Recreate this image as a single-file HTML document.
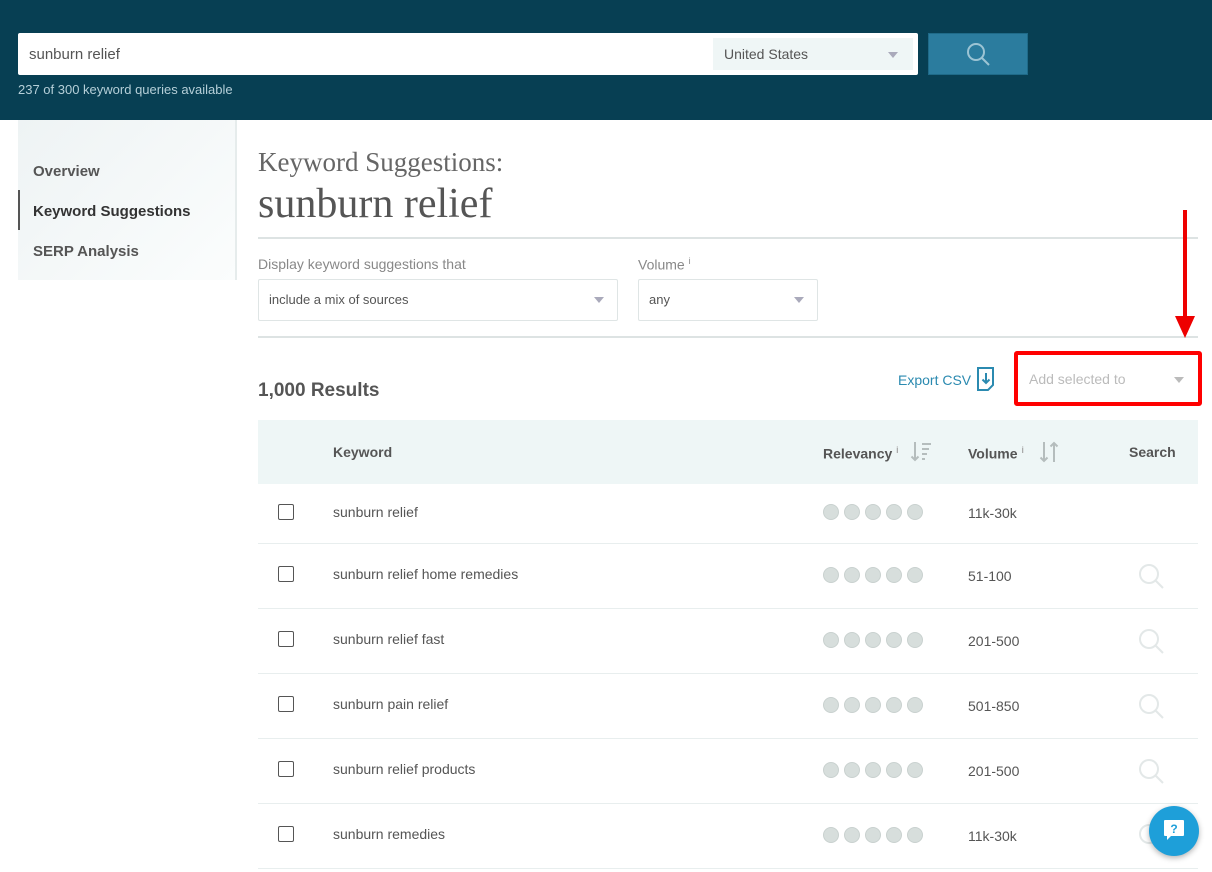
<!DOCTYPE html>
<html><head><style>
*{box-sizing:border-box;margin:0;padding:0}
body{width:1212px;height:872px;overflow:hidden;background:#fff;font-family:"Liberation Sans",sans-serif;position:relative;color:#4a4f52}
.a{position:absolute}
.hdr{left:0;top:0;width:1212px;height:120px;background:#073f53}
.dot{display:inline-block;width:16px;height:16px;border-radius:50%;background:#d7dedc;border:1px solid #c9d1cf;margin-right:5px}
.row{left:258px;width:940px;height:65px;border-bottom:1px solid #e8eeee}
.cb{left:20px;width:16px;height:16px;border:1.5px solid #555;border-radius:2px}
.kw{left:75px;font-size:14px;color:#555}
.vol{left:710px;font-size:14px;color:#555}
.dots{left:565px}
.caret{width:0;height:0;border-left:5px solid transparent;border-right:5px solid transparent;border-top:6px solid #aab}
</style></head><body>
<div class="a hdr"></div>
<div class="a" style="left:18px;top:33px;width:900px;height:42px;background:#fff;border-radius:2px"></div>
<div class="a" style="left:29px;top:46px;font-size:15px;color:#555">sunburn relief</div>
<div class="a" style="left:713px;top:38px;width:200px;height:32px;background:#eff6f6"></div>
<div class="a" style="left:724px;top:46px;font-size:14px;color:#555">United States</div>
<div class="a caret" style="left:888px;top:52px"></div>
<div class="a" style="left:928px;top:33px;width:100px;height:42px;background:#2b7c9e;border:1px solid #1f6a88"></div>
<svg class="a" style="left:964px;top:40px" width="30" height="30" viewBox="0 0 30 30"><circle cx="12" cy="12" r="8" fill="none" stroke="#9cc4d4" stroke-width="2"/><line x1="18" y1="18" x2="25" y2="25" stroke="#9cc4d4" stroke-width="2"/></svg>
<div class="a" style="left:18px;top:82px;font-size:13px;color:#b5cfd8">237 of 300 keyword queries available</div>

<div class="a" style="left:18px;top:120px;width:219px;height:160px;background:linear-gradient(135deg,#eef3f4,#fbfdfd);border-right:2px solid #e6ecec"></div>
<div class="a" style="left:18px;top:190px;width:2px;height:40px;background:#555"></div>
<div class="a" style="left:33px;top:163px;font-size:15px;font-weight:bold;color:#555">Overview</div>
<div class="a" style="left:33px;top:203px;font-size:15px;font-weight:bold;color:#333">Keyword Suggestions</div>
<div class="a" style="left:33px;top:243px;font-size:15px;font-weight:bold;color:#555">SERP Analysis</div>

<div class="a" style="left:258px;top:147px;font-family:'Liberation Serif',serif;font-size:27px;color:#666">Keyword Suggestions:</div>
<div class="a" style="left:258px;top:180px;font-family:'Liberation Serif',serif;font-size:42px;color:#555">sunburn relief</div>
<div class="a" style="left:258px;top:237px;width:940px;height:2px;background:#dde3e3"></div>
<div class="a" style="left:258px;top:256px;font-size:14px;color:#888">Display keyword suggestions that</div>
<div class="a" style="left:638px;top:256px;font-size:14px;color:#888">Volume <sup style="font-size:9px">i</sup></div>
<div class="a" style="left:258px;top:279px;width:360px;height:42px;border:1px solid #dfe5e5;border-radius:2px"></div>
<div class="a" style="left:269px;top:292px;font-size:13px;color:#555">include a mix of sources</div>
<div class="a caret" style="left:594px;top:297px"></div>
<div class="a" style="left:638px;top:279px;width:180px;height:42px;border:1px solid #dfe5e5;border-radius:2px"></div>
<div class="a" style="left:649px;top:292px;font-size:13px;color:#555">any</div>
<div class="a caret" style="left:794px;top:297px"></div>
<div class="a" style="left:258px;top:336px;width:940px;height:2px;background:#dde3e3"></div>

<div class="a" style="left:258px;top:380px;font-size:19px;font-weight:bold;color:#555">1,000 Results</div>
<div class="a" style="left:898px;top:372px;font-size:14px;color:#2b8ab0">Export CSV</div>
<svg class="a" style="left:976px;top:366px" width="20" height="26" viewBox="0 0 20 26"><path d="M2 2h15v17l-5 5H2z" fill="none" stroke="#2b8ab0" stroke-width="2"/><path d="M10 7v10M6.5 13.5L10 17l3.5-3.5" fill="none" stroke="#2b8ab0" stroke-width="2"/></svg>
<div class="a" style="left:1014px;top:351px;width:188px;height:55px;border:4px solid #f00;border-radius:3px"></div>
<div class="a" style="left:1029px;top:371px;font-size:14px;color:#bbb">Add selected to</div>
<div class="a caret" style="left:1174px;top:377px;border-top-color:#bbb"></div>
<svg class="a" style="left:1172px;top:210px" width="26" height="130" viewBox="0 0 26 130"><line x1="13" y1="0" x2="13" y2="108" stroke="#e00" stroke-width="4"/><path d="M3 106L13 128L23 106z" fill="#e00"/></svg>

<div class="a" style="left:258px;top:420px;width:940px;height:64px;background:#eef6f6"></div>
<div class="a" style="left:333px;top:444px;font-size:14px;font-weight:bold;color:#555">Keyword</div>
<div class="a" style="left:823px;top:445px;font-size:14px;font-weight:bold;color:#555">Relevancy <sup style="font-size:9px;color:#aaa">i</sup></div>
<svg class="a" style="left:910px;top:440px" width="24" height="24" viewBox="0 0 24 24"><path d="M5 2v18M1.5 16.5L5 20l3.5-3.5" fill="none" stroke="#b5bdbd" stroke-width="2"/><path d="M12 4h9M12 9h7M12 14h5M12 19h3" stroke="#b5bdbd" stroke-width="2"/></svg>
<div class="a" style="left:968px;top:445px;font-size:14px;font-weight:bold;color:#555">Volume <sup style="font-size:9px;color:#aaa">i</sup></div>
<svg class="a" style="left:1037px;top:440px" width="26" height="24" viewBox="0 0 26 24"><path d="M7 2v19M3.5 17.5L7 21l3.5-3.5M17 22V3M13.5 6.5L17 3l3.5 3.5" fill="none" stroke="#b5bdbd" stroke-width="2"/></svg>
<div class="a" style="left:1129px;top:444px;font-size:14px;font-weight:bold;color:#555">Search</div>

<div class="a row" style="top:484px;height:60px"><div class="a cb" style="top:20px"></div><div class="a kw" style="top:20px">sunburn relief</div><div class="a dots" style="top:20px"><span class="dot"></span><span class="dot"></span><span class="dot"></span><span class="dot"></span><span class="dot"></span></div><div class="a vol" style="top:21px">11k-30k</div></div>
<div class="a row" style="top:544px"><div class="a cb" style="top:22px"></div><div class="a kw" style="top:22px">sunburn relief home remedies</div><div class="a dots" style="top:23px"><span class="dot"></span><span class="dot"></span><span class="dot"></span><span class="dot"></span><span class="dot"></span></div><div class="a vol" style="top:24px">51-100</div><svg class="a" style="left:880px;top:19px" width="28" height="28"><circle cx="11" cy="11" r="9" fill="none" stroke="#e3e8e8" stroke-width="2"/><line x1="17.5" y1="17.5" x2="25" y2="25" stroke="#e3e8e8" stroke-width="2"/></svg></div>
<div class="a row" style="top:609px"><div class="a cb" style="top:22px"></div><div class="a kw" style="top:22px">sunburn relief fast</div><div class="a dots" style="top:23px"><span class="dot"></span><span class="dot"></span><span class="dot"></span><span class="dot"></span><span class="dot"></span></div><div class="a vol" style="top:24px">201-500</div><svg class="a" style="left:880px;top:19px" width="28" height="28"><circle cx="11" cy="11" r="9" fill="none" stroke="#e3e8e8" stroke-width="2"/><line x1="17.5" y1="17.5" x2="25" y2="25" stroke="#e3e8e8" stroke-width="2"/></svg></div>
<div class="a row" style="top:674px"><div class="a cb" style="top:22px"></div><div class="a kw" style="top:22px">sunburn pain relief</div><div class="a dots" style="top:23px"><span class="dot"></span><span class="dot"></span><span class="dot"></span><span class="dot"></span><span class="dot"></span></div><div class="a vol" style="top:24px">501-850</div><svg class="a" style="left:880px;top:19px" width="28" height="28"><circle cx="11" cy="11" r="9" fill="none" stroke="#e3e8e8" stroke-width="2"/><line x1="17.5" y1="17.5" x2="25" y2="25" stroke="#e3e8e8" stroke-width="2"/></svg></div>
<div class="a row" style="top:739px"><div class="a cb" style="top:22px"></div><div class="a kw" style="top:22px">sunburn relief products</div><div class="a dots" style="top:23px"><span class="dot"></span><span class="dot"></span><span class="dot"></span><span class="dot"></span><span class="dot"></span></div><div class="a vol" style="top:24px">201-500</div><svg class="a" style="left:880px;top:19px" width="28" height="28"><circle cx="11" cy="11" r="9" fill="none" stroke="#e3e8e8" stroke-width="2"/><line x1="17.5" y1="17.5" x2="25" y2="25" stroke="#e3e8e8" stroke-width="2"/></svg></div>
<div class="a row" style="top:804px"><div class="a cb" style="top:22px"></div><div class="a kw" style="top:22px">sunburn remedies</div><div class="a dots" style="top:23px"><span class="dot"></span><span class="dot"></span><span class="dot"></span><span class="dot"></span><span class="dot"></span></div><div class="a vol" style="top:24px">11k-30k</div><svg class="a" style="left:880px;top:19px" width="28" height="28"><circle cx="11" cy="11" r="9" fill="none" stroke="#e3e8e8" stroke-width="2"/><line x1="17.5" y1="17.5" x2="25" y2="25" stroke="#e3e8e8" stroke-width="2"/></svg></div>

<div class="a" style="left:1149px;top:806px;width:50px;height:50px;border-radius:50%;background:#1e9fd9;box-shadow:0 2px 6px rgba(0,0,0,.3)"></div>
<svg class="a" style="left:1162px;top:818px" width="24" height="24" viewBox="0 0 24 24"><path d="M3 2h18a1 1 0 0 1 1 1v14a1 1 0 0 1-1 1H9l-4 4v-4H3a1 1 0 0 1-1-1V3a1 1 0 0 1 1-1z" fill="#fff"/><text x="12" y="15" text-anchor="middle" font-family="Liberation Sans" font-weight="bold" font-size="12" fill="#1e9fd9">?</text></svg>
</body></html>
